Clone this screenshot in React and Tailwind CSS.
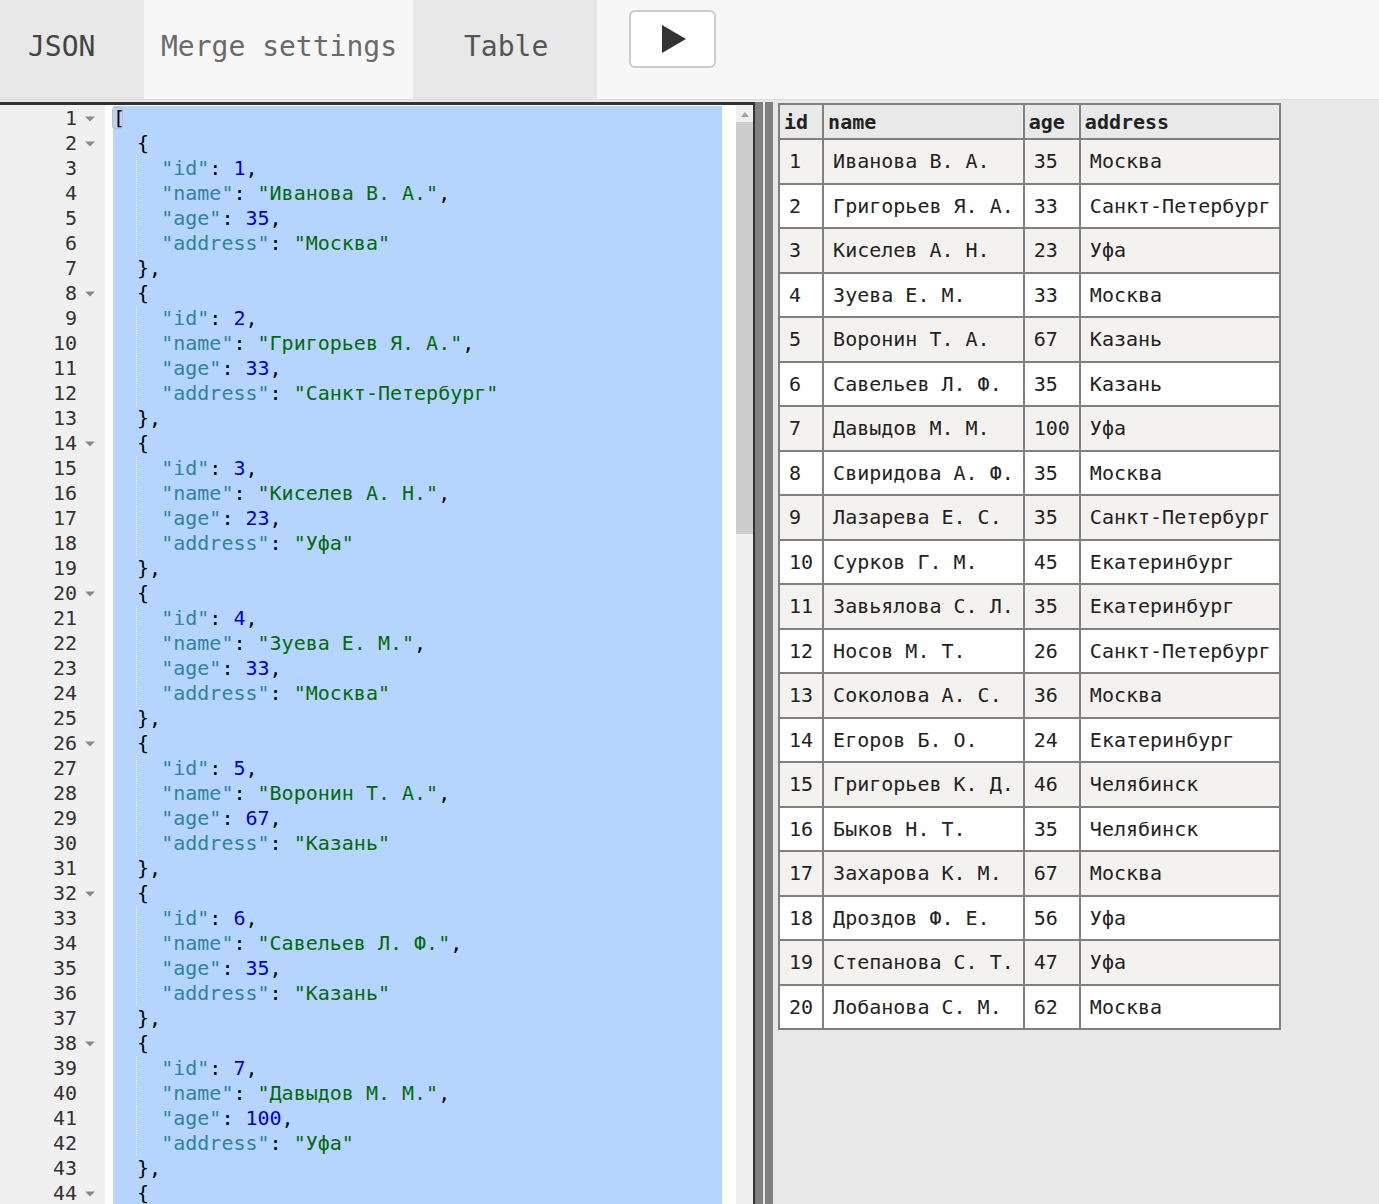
import React from 'react';

const people = [
  { id: 1, name: 'Иванова В. А.', age: 35, address: 'Москва' },
  { id: 2, name: 'Григорьев Я. А.', age: 33, address: 'Санкт-Петербург' },
  { id: 3, name: 'Киселев А. Н.', age: 23, address: 'Уфа' },
  { id: 4, name: 'Зуева Е. М.', age: 33, address: 'Москва' },
  { id: 5, name: 'Воронин Т. А.', age: 67, address: 'Казань' },
  { id: 6, name: 'Савельев Л. Ф.', age: 35, address: 'Казань' },
  { id: 7, name: 'Давыдов М. М.', age: 100, address: 'Уфа' },
  { id: 8, name: 'Свиридова А. Ф.', age: 35, address: 'Москва' },
  { id: 9, name: 'Лазарева Е. С.', age: 35, address: 'Санкт-Петербург' },
  { id: 10, name: 'Сурков Г. М.', age: 45, address: 'Екатеринбург' },
  { id: 11, name: 'Завьялова С. Л.', age: 35, address: 'Екатеринбург' },
  { id: 12, name: 'Носов М. Т.', age: 26, address: 'Санкт-Петербург' },
  { id: 13, name: 'Соколова А. С.', age: 36, address: 'Москва' },
  { id: 14, name: 'Егоров Б. О.', age: 24, address: 'Екатеринбург' },
  { id: 15, name: 'Григорьев К. Д.', age: 46, address: 'Челябинск' },
  { id: 16, name: 'Быков Н. Т.', age: 35, address: 'Челябинск' },
  { id: 17, name: 'Захарова К. М.', age: 67, address: 'Москва' },
  { id: 18, name: 'Дроздов Ф. Е.', age: 56, address: 'Уфа' },
  { id: 19, name: 'Степанова С. Т.', age: 47, address: 'Уфа' },
  { id: 20, name: 'Лобанова С. М.', age: 62, address: 'Москва' },
];

const K = 'text-[#318495]';
const S = 'text-[#036a07]';
const N = 'text-[#0000cd]';
const P = 'text-black';

function buildLines() {
  const lines = [{ fold: true, match: true, toks: [['[', P]] }];
  people.slice(0, 7).forEach((p) => {
    lines.push({ fold: true, toks: [['  {', P]] });
    lines.push({ guide: true, toks: [['    ', P], ['"id"', K], [': ', P], [String(p.id), N], [',', P]] });
    lines.push({ guide: true, toks: [['    ', P], ['"name"', K], [': ', P], [`"${p.name}"`, S], [',', P]] });
    lines.push({ guide: true, toks: [['    ', P], ['"age"', K], [': ', P], [String(p.age), N], [',', P]] });
    lines.push({ guide: true, toks: [['    ', P], ['"address"', K], [': ', P], [`"${p.address}"`, S]] });
    lines.push({ toks: [['  },', P]] });
  });
  lines.push({ fold: true, toks: [['  {', P]] });
  return lines;
}

const lines = buildLines();

const FoldArrow = () => (
  <svg width="10" height="6" viewBox="0 0 10 6" className="ml-[8px]">
    <path d="M0 0.5 H10 L5 5.5 Z" fill="#8a8a8a" />
  </svg>
);

const PlayIcon = () => (
  <svg width="24" height="28" viewBox="0 0 24 28">
    <path d="M0 0 L24 14 L0 28 Z" fill="#333333" />
  </svg>
);

const Editor = () => (
  <div className="w-[755px] h-full border-t-[3px] border-r-2 border-[#333] bg-white flex overflow-hidden font-['DejaVu_Sans_Mono',monospace] text-[20px]">
    {/* gutter */}
    <div className="w-[105px] shrink-0 bg-[#f0f0f0] pt-[1px] text-[#333]">
      {lines.map((l, i) => (
        <div key={i} className="h-[25px] leading-[25px] flex items-center">
          <span className="w-[77px] text-right">{i + 1}</span>
          {l.fold && <FoldArrow />}
        </div>
      ))}
    </div>

    {/* code */}
    <div className="flex-1 pl-[8px] pt-[1px]">
      <div className="w-[609px] bg-[#b5d5ff]">
        {lines.map((l, i) => (
          <div key={i} className="relative h-[25px] leading-[25px] whitespace-pre">
            {l.guide && (
              <span className="absolute left-[23px] top-0 h-[25px] border-l border-dotted border-[#f2f2f2]" />
            )}
            {l.match && (
              <span className="absolute left-[-1px] top-[1px] w-[11px] h-[22px] border border-[#c0c0c0] rounded-[3px]" />
            )}
            {l.toks.map(([t, c], j) => (
              <span key={j} className={c}>{t}</span>
            ))}
          </div>
        ))}
      </div>
    </div>

    {/* scrollbar */}
    <div className="w-[17px] shrink-0 bg-[#f0f0f0] flex flex-col">
      <div className="h-[17px] flex items-center justify-center">
        <svg width="8" height="6" viewBox="0 0 8 6">
          <path d="M0 6 L4 1 L8 6 Z" fill="#a3a3a3" />
        </svg>
      </div>
      <div className="h-[412px] bg-[#cdcdcd]" />
    </div>
  </div>
);

const Splitter = () => (
  <div className="w-[18px] h-full bg-[#808080] flex shrink-0">
    <div className="w-[8px]" />
    <div className="w-[2px] bg-[#e6e6e6]" />
  </div>
);

const cell = 'border-2 border-[#808080]';

const DataTable = () => (
  <table className="border-collapse border-2 border-[#808080] font-['DejaVu_Sans_Mono',monospace] text-[20px] text-[#222]">
    <thead>
      <tr className="bg-[#e9e9e9]">
        {['id', 'name', 'age', 'address'].map((h) => (
          <th key={h} className={`${cell} h-[35px] px-[4px] py-0 text-left font-bold`}>{h}</th>
        ))}
      </tr>
    </thead>
    <tbody>
      {people.map((p, i) => (
        <tr key={p.id} className={i % 2 === 0 ? 'bg-[#f3f2ef]' : 'bg-white'}>
          <td className={`${cell} h-[44.5px] px-[9px] py-0 whitespace-pre`}>{p.id}</td>
          <td className={`${cell} h-[44.5px] px-[9px] py-0 whitespace-pre`}>{p.name}</td>
          <td className={`${cell} h-[44.5px] px-[9px] py-0 whitespace-pre`}>{p.age}</td>
          <td className={`${cell} h-[44.5px] px-[9px] py-0 whitespace-pre`}>{p.address}</td>
        </tr>
      ))}
    </tbody>
  </table>
);

export default function App() {
  return (
    <div className="w-[1379px] h-[1204px] overflow-hidden flex flex-col bg-[#e8e8e8]">
      {/* top bar */}
      <div className="h-[100px] shrink-0 flex bg-[#f7f7f7] border-b-[1px] border-[#dcdcdc] font-['DejaVu_Sans_Mono',monospace] text-[28px]">
        <div className="w-[144px] bg-[#e8e8e8] pl-[28px] pb-[6px] flex items-center text-[#444]">JSON</div>
        <div className="w-[269px] bg-[#f7f7f7] pl-[17px] pb-[6px] flex items-center text-[#6a6a6a]">Merge settings</div>
        <div className="w-[184px] bg-[#e8e8e8] pl-[51px] pb-[6px] flex items-center text-[#555]">Table</div>
        <div className="pl-[32px] pt-[10px]">
          <button className="w-[87px] h-[58px] bg-white border-2 border-[#cccccc] rounded-[6px] flex items-center justify-center pl-[2px]">
            <PlayIcon />
          </button>
        </div>
      </div>

      {/* main */}
      <div className="flex-1 flex min-h-0 pt-[2px]">
        <Editor />
        <Splitter />
        <div className="flex-1 pl-[5px] pt-[1px]">
          <DataTable />
        </div>
      </div>
    </div>
  );
}
